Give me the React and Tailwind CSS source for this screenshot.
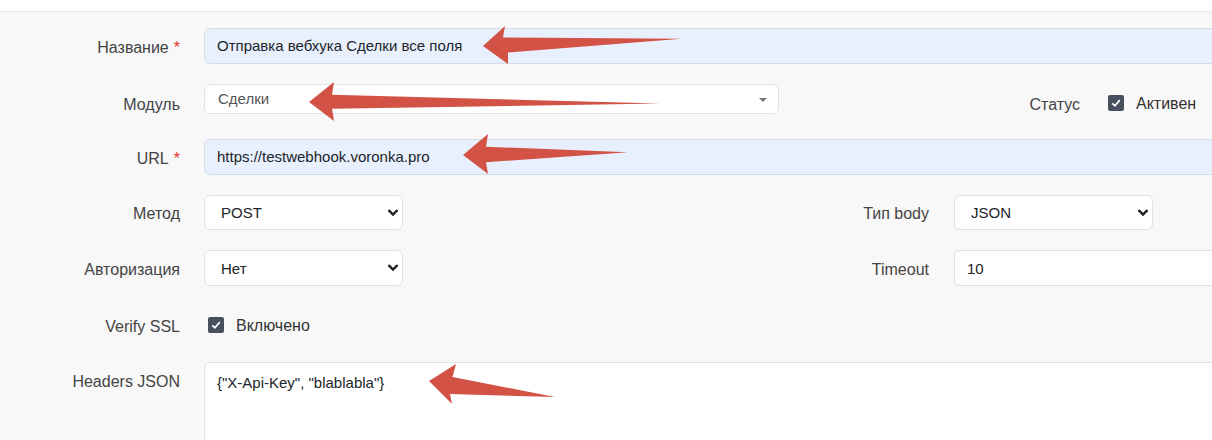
import React from "react";

function Label({ children, className = "pt-[3px]" }) {
  return (
    <div className={"w-[180px] shrink-0 text-right leading-[20px] " + className}>
      {children}
    </div>
  );
}

function Req() {
  return <span className="ml-[5px] text-[#e3342f]">*</span>;
}

function Chevron() {
  return (
    <svg width="10" height="7" viewBox="0 0 10 7" className="absolute right-[4px] top-1/2 -translate-y-1/2">
      <path d="M1.2 1.2 L5 5 L8.8 1.2" fill="none" stroke="#222" strokeWidth="2.4" strokeLinecap="square" />
    </svg>
  );
}

function Check() {
  return (
    <div className="w-[16px] h-[16px] shrink-0 rounded-[2px] bg-[#48505f] flex items-center justify-center">
      <svg width="12" height="12" viewBox="0 0 12 12">
        <path d="M2.3 6.3 L4.9 8.8 L9.8 3.2" fill="none" stroke="#fff" strokeWidth="1.8" />
      </svg>
    </div>
  );
}

function NativeSelect({ value, h = "h-[35px]" }) {
  return (
    <div className={"relative w-[199px] shrink-0 rounded-[6px] border border-[#dfe1e6] bg-white flex items-center pl-[16px] pt-[2px] text-[15px] text-[#212529] " + h}>
      {value}
      <Chevron />
    </div>
  );
}

export default function App() {
  return (
    <div className="relative w-[1212px] h-[440px] overflow-hidden bg-[#f8f8f8] font-['Liberation_Sans',Arial,sans-serif] text-[16px] text-[#444]">
      <div className="h-[12px] bg-white border-b border-[#ebebeb]" />
      <div className="w-[1260px] pt-[16px]">
        {/* Название */}
        <div className="flex items-center h-[36px]">
          <Label>
            Название<Req />
          </Label>
          <div className="ml-[24px] flex-1 h-[36px] rounded-[6px] border border-[#d5dce6] bg-[#e8f0fe] pl-[12px] pt-[1px] flex items-center text-[15px] text-[#212529]">
            Отправка вебхука Сделки все поля
          </div>
        </div>

        {/* Модуль */}
        <div className="flex items-center h-[38px] mt-[20px]">
          <Label>Модуль</Label>
          <div className="relative ml-[24px] self-start w-[575px] h-[30px] shrink-0 rounded-[6px] border border-[#dfe1e6] bg-white pl-[13px] flex items-center text-[15px] text-[#555]">
            Сделки
            <svg width="8" height="4" viewBox="0 0 8 4" className="absolute right-[11px] top-[13px]">
              <path d="M0 0 L8 0 L4 4 Z" fill="#777" />
            </svg>
          </div>
          <div className="w-[301px] shrink-0 text-right leading-[20px] pt-[3px]">Статус</div>
          <div className="ml-[28px]">
            <Check />
          </div>
          <div className="ml-[12px] leading-[20px] pt-[2px] text-[#333]">Активен</div>
        </div>

        {/* URL */}
        <div className="flex items-center h-[36px] mt-[17px]">
          <Label>
            URL<Req />
          </Label>
          <div className="ml-[24px] flex-1 h-[36px] rounded-[6px] border border-[#d5dce6] bg-[#e8f0fe] pl-[12px] pt-[1px] flex items-center text-[15px] text-[#212529]">
            https://testwebhook.voronka.pro
          </div>
        </div>

        {/* Метод / Тип body */}
        <div className="flex items-center h-[35px] mt-[20px]">
          <Label>Метод</Label>
          <div className="ml-[24px]">
            <NativeSelect value="POST" />
          </div>
          <div className="w-[526px] shrink-0 text-right leading-[20px] pt-[3px]">Тип body</div>
          <div className="ml-[25px]">
            <NativeSelect value="JSON" />
          </div>
        </div>

        {/* Авторизация / Timeout */}
        <div className="flex items-center h-[36px] mt-[20px]">
          <Label>Авторизация</Label>
          <div className="ml-[24px]">
            <NativeSelect value="Нет" h="h-[36px]" />
          </div>
          <div className="w-[526px] shrink-0 text-right leading-[20px] pt-[3px]">Timeout</div>
          <div className="ml-[25px] flex-1 h-[36px] rounded-[6px] border border-[#dfe1e6] bg-white pl-[12px] pt-[2px] flex items-center text-[15px] text-[#212529]">
            10
          </div>
        </div>

        {/* Verify SSL */}
        <div className="flex items-center h-[36px] mt-[21px]">
          <Label>Verify SSL</Label>
          <div className="ml-[28px]">
            <Check />
          </div>
          <div className="ml-[12px] leading-[20px] pt-[2px] text-[#333]">Включено</div>
        </div>

        {/* Headers JSON */}
        <div className="flex items-start mt-[19px]">
          <Label className="pt-[10px]">Headers JSON</Label>
          <div className="ml-[24px] flex-1 h-[120px] rounded-[6px] border border-[#dfe1e6] bg-white pl-[12px] pt-[10px] text-[15px] leading-[20px] text-[#212529]">
            {'{"X-Api-Key", "blablabla"}'}
          </div>
        </div>
      </div>

      {/* annotation arrows */}
      <svg
        className="absolute left-0 top-0 pointer-events-none"
        width="1212"
        height="440"
        viewBox="0 0 1212 440"
      >
        <polygon points="483,46 505,26 503,37.5 682,38.8 508,52.5 508,64" fill="#d35246" />
        <polygon points="309,102 334,82 332,94.7 660,103.5 332,108.7 334,121" fill="#d35246" />
        <polygon points="463,155 488,134 486,146.7 628,152.3 486,162.3 488,174" fill="#d35246" />
        <polygon points="429,381 456,364 452.5,377 555,397 450,394 452,404" fill="#d35246" />
      </svg>
    </div>
  );
}
